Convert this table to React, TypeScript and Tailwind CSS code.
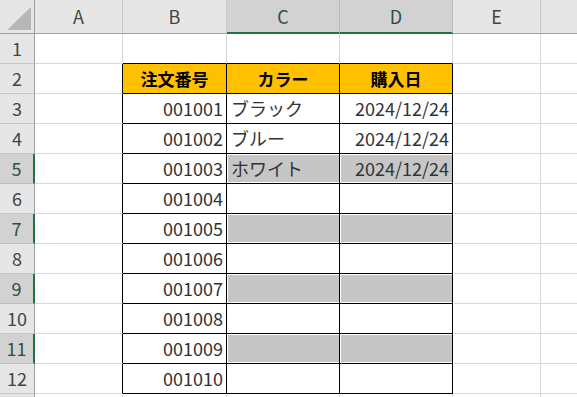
import React from 'react';

const cols = ['A', 'B', 'C', 'D', 'E', ''];
const selCols = ['C', 'D'];
const selRows = [5, 7, 9, 11];

const colors: Record<number, string> = { 3: 'ブラック', 4: 'ブルー', 5: 'ホワイト' };

function Corner() {
  return (
    <div className="bg-[#e6e6e6] border-r border-b border-[#9f9f9f] flex items-end justify-end p-[3px]">
      <svg width="24" height="23" viewBox="0 0 24 23">
        <polygon points="24,0 24,23 0,23" fill="#b7b7b7" />
      </svg>
    </div>
  );
}

function ColHeader({ name }: { name: string }) {
  const sel = selCols.includes(name);
  return (
    <div
      className={
        sel
          ? 'bg-[#d2d2d2] border-r border-[#bdbdbd] border-b-2 border-b-[#217346] flex items-center justify-center text-[18px] text-[#2f4f3f]'
          : 'bg-[#e6e6e6] border-r border-[#c8c8c8] border-b border-b-[#9f9f9f] flex items-center justify-center text-[18px] text-[#444]'
      }
    >
      {name}
    </div>
  );
}

function RowHeader({ n }: { n: number }) {
  const sel = selRows.includes(n);
  return (
    <div
      className={
        sel
          ? 'bg-[#d2d2d2] border-b border-[#bdbdbd] border-r-2 border-r-[#217346] flex items-center justify-center text-[18px] text-[#2f4f3f]'
          : 'bg-[#e6e6e6] border-b border-[#c8c8c8] border-r border-r-[#9f9f9f] flex items-center justify-center text-[18px] text-[#444]'
      }
    >
      {n > 12 ? '' : n}
    </div>
  );
}

function Cell({ row, col }: { row: number; col: string }) {
  const inTable = row >= 2 && row <= 12 && ['B', 'C', 'D'].includes(col);
  const aboveTable = row === 1 && ['B', 'C', 'D'].includes(col);
  const leftOfTable = row >= 2 && row <= 12 && col === 'A';

  let border = 'border-r border-b border-[#d9d9d9]';
  if (inTable) border = 'border-r border-b border-black';
  else if (aboveTable) border = 'border-r border-[#d9d9d9] border-b border-b-black';
  else if (leftOfTable) border = 'border-b border-[#d9d9d9] border-r border-r-black';

  const grey = selRows.includes(row) && (col === 'C' || col === 'D');

  if (row === 2 && inTable) {
    const label = col === 'B' ? '注文番号' : col === 'C' ? 'カラー' : '購入日';
    return (
      <div className={`${border} bg-[#ffc000] flex items-center justify-center font-bold text-[17px] text-black`}>
        {label}
      </div>
    );
  }

  let text = '';
  let align = 'justify-start pl-[4px]';
  if (inTable && col === 'B') {
    text = String(1000 + row - 2).padStart(6, '0');
    align = 'justify-end pr-[3px]';
  } else if (inTable && col === 'C') {
    text = colors[row] ?? '';
  } else if (inTable && col === 'D') {
    text = row <= 5 ? '2024/12/24' : '';
    align = 'justify-end pr-[3px]';
  }

  return (
    <div className={`${border} relative flex items-center ${align} text-[18px] text-[#333]`}>
      {grey && <div className="absolute top-[1px] left-[1px] right-0 bottom-[1px] bg-[#c6c6c6]" />}
      <span className="relative">{text}</span>
    </div>
  );
}

export default function App() {
  const rows = Array.from({ length: 13 }, (_, i) => i + 1);
  return (
    <div
      className="w-[577px] h-[397px] overflow-hidden bg-white"
      style={{ fontFamily: '"Noto Sans CJK JP", "Noto Sans", sans-serif' }}
    >
      <div className="grid grid-cols-[35px_88px_104px_113px_113px_88px_60px] grid-rows-[34px_repeat(13,30px)]">
        <Corner />
        {cols.map((c, i) => (
          <ColHeader key={i} name={c} />
        ))}
        {rows.map((r) => (
          <React.Fragment key={r}>
            <RowHeader n={r} />
            {cols.map((c, i) => (
              <Cell key={i} row={r} col={c} />
            ))}
          </React.Fragment>
        ))}
      </div>
    </div>
  );
}
